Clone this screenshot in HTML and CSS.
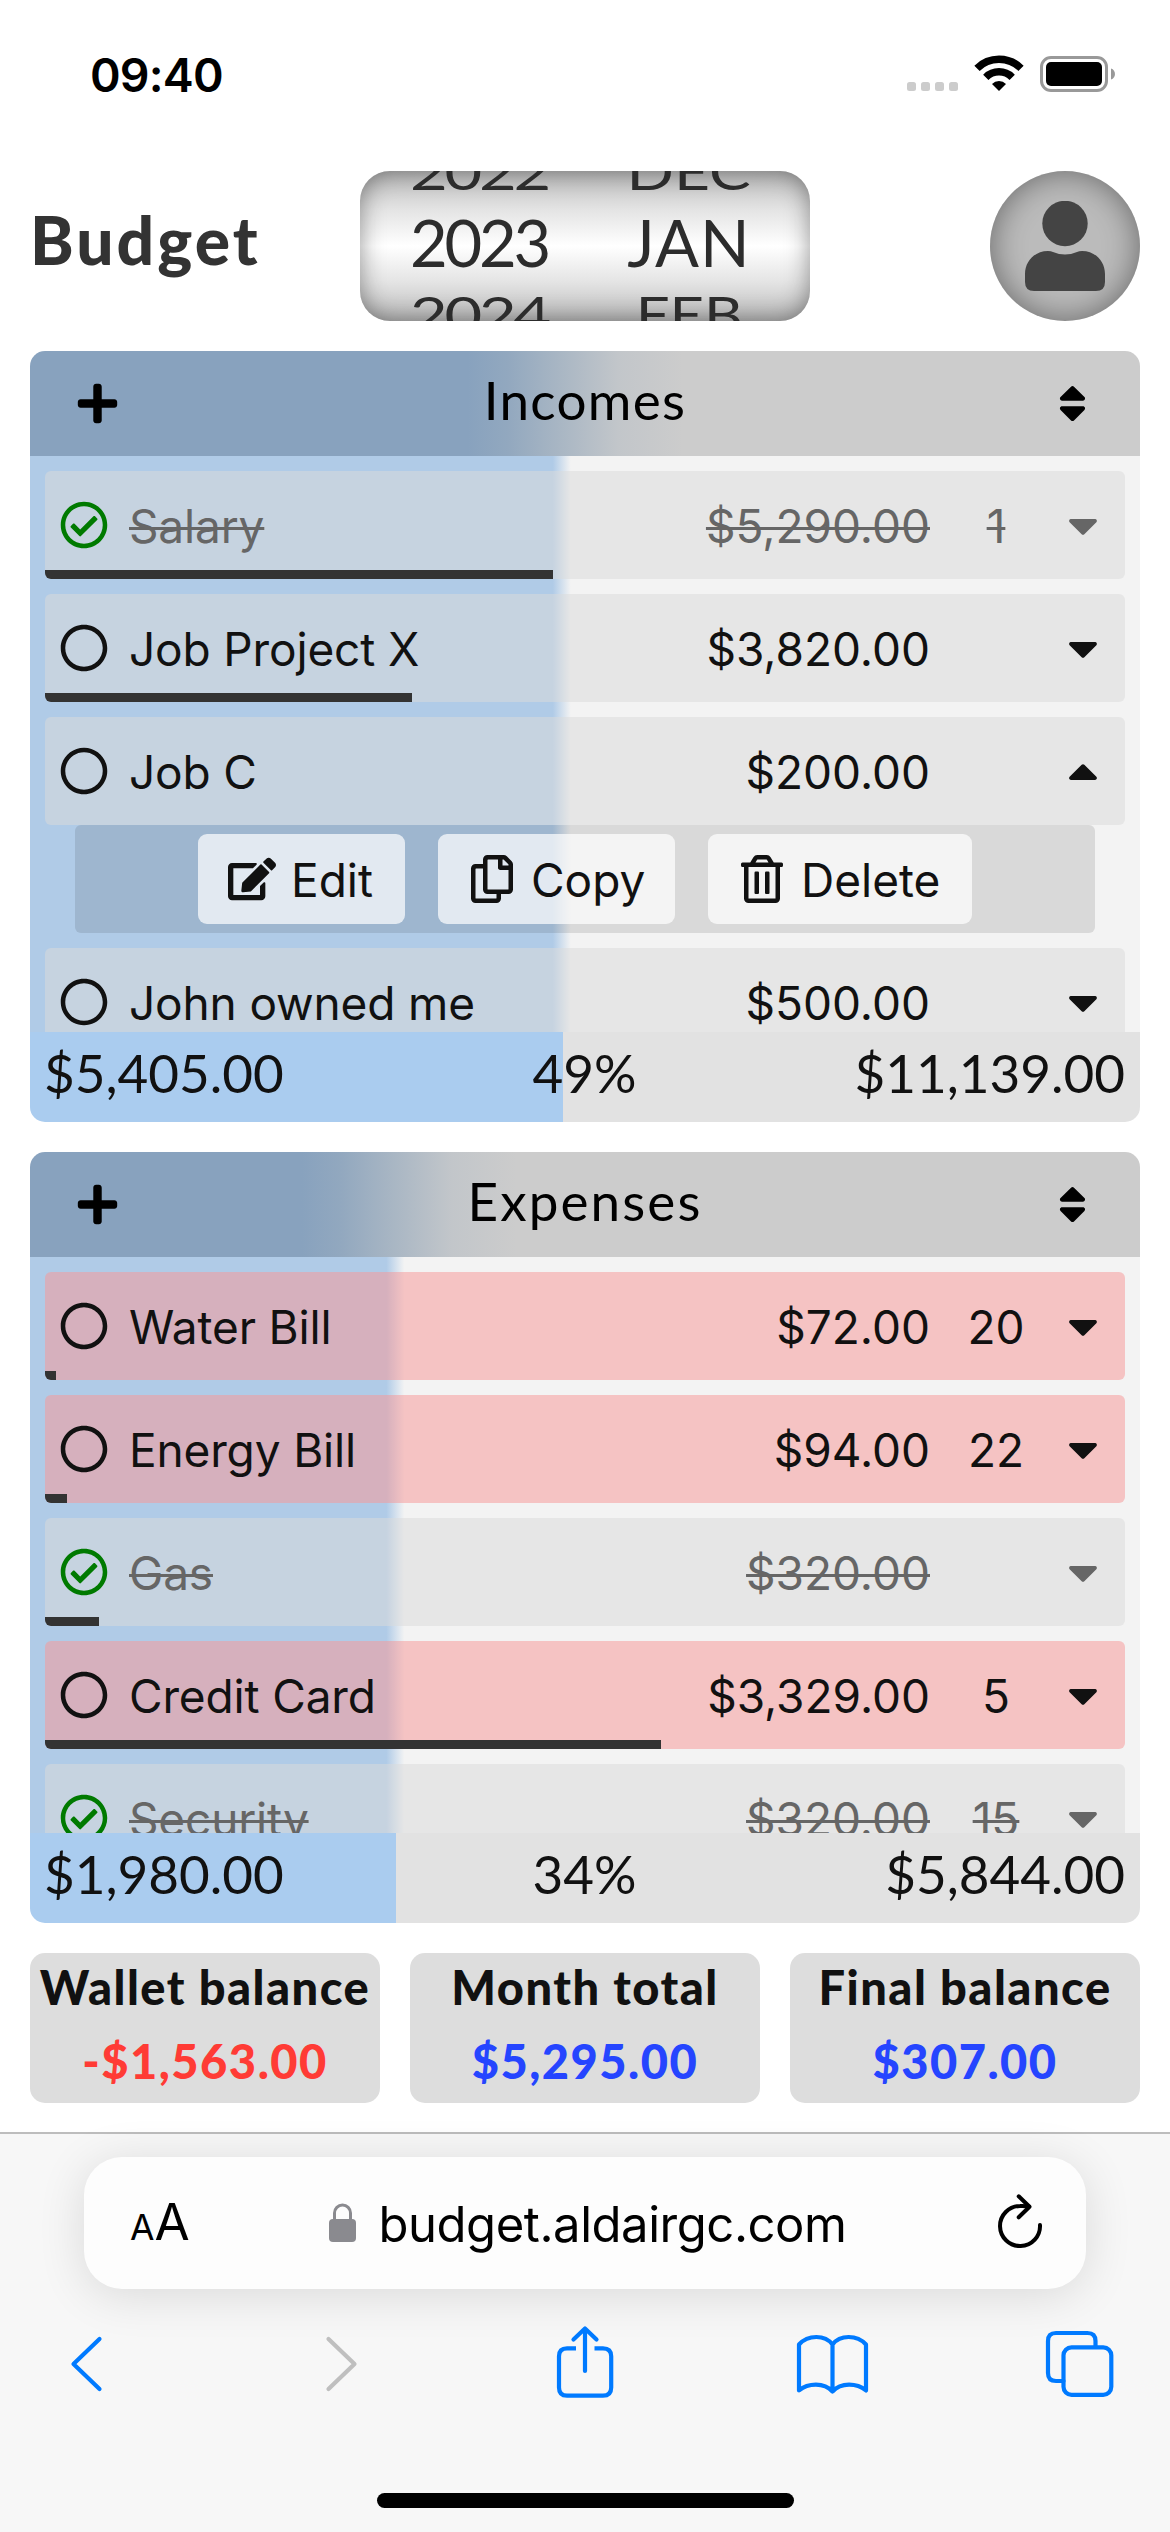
FILE: index.html
```html
<!DOCTYPE html>
<html lang="en">
<head>
<meta charset="utf-8">
<title>Budget</title>
<link rel="stylesheet" href="styles.css">
</head>
<body>
<svg class="defs" aria-hidden="true">
  <symbol id="plus" viewBox="0 0 448 512"><path d="M416 208H272V64c0-17.67-14.33-32-32-32h-32c-17.67 0-32 14.33-32 32v144H32c-17.67 0-32 14.33-32 32v32c0 17.67 14.33 32 32 32h144v144c0 17.67 14.33 32 32 32h32c17.67 0 32-14.33 32-32V304h144c17.67 0 32-14.33 32-32v-32c0-17.67-14.33-32-32-32z"/></symbol>
  <symbol id="sort" viewBox="0 0 320 512"><path d="M41 288h238c21.4 0 32.1 25.9 17 41L177 448c-9.4 9.4-24.6 9.4-33.9 0L24 329c-15.1-15.1-4.4-41 17-41zm255-105L177 64c-9.4-9.4-24.6-9.4-33.9 0L24 183c-15.1 15.1-4.4 41 17 41h238c21.4 0 32.1-25.9 17-41z"/></symbol>
  <symbol id="down" viewBox="0 0 320 512"><path d="M31.3 192h257.3c17.8 0 26.7 21.5 14.1 34.1L174.1 354.7c-7.8 7.8-20.5 7.8-28.3 0L17.2 226.1C4.6 213.5 13.5 192 31.3 192z"/></symbol>
  <symbol id="up" viewBox="0 0 320 512"><path d="M288.662 352H31.338c-17.818 0-26.741-21.543-14.142-34.142l128.662-128.662c7.81-7.81 20.474-7.81 28.284 0l128.662 128.662c12.6 12.599 3.676 34.142-14.142 34.142z"/></symbol>
  <symbol id="circle" viewBox="0 0 512 512"><path d="M256 8C119 8 8 119 8 256s111 248 248 248 248-111 248-248S393 8 256 8zm0 448c-110.500 0-200-89.500-200-200S145.500 56 256 56s200 89.500 200 200-89.500 200-200 200z"/></symbol>
  <symbol id="check" viewBox="0 0 512 512"><path d="M256 8C119.033 8 8 119.033 8 256s111.033 248 248 248 248-111.033 248-248S392.967 8 256 8zm0 48c110.532 0 200 89.451 200 200 0 110.532-89.451 200-200 200-110.532 0-200-89.451-200-200 0-110.532 89.451-200 200-200m140.204 130.267l-22.536-22.718c-4.667-4.705-12.265-4.736-16.970-.068L215.346 303.697l-59.792-60.277c-4.667-4.705-12.265-4.736-16.970-.069l-22.719 22.536c-4.705 4.667-4.736 12.265-.068 16.971l90.781 91.516c4.667 4.705 12.265 4.736 16.970.068l172.589-171.204c4.704-4.668 4.734-12.266.066-16.971z"/></symbol>
  <symbol id="edit" viewBox="0 0 576 512"><path d="M402.600 83.200l90.200 90.200c3.800 3.800 3.800 10 0 13.800L274.400 405.600l-92.800 10.300c-12.400 1.400-22.900-9.100-21.500-21.500l10.300-92.800L388.800 83.200c3.800-3.800 10-3.800 13.800 0zm162-22.900l-48.800-48.800c-15.200-15.200-39.900-15.200-55.200 0l-35.400 35.400c-3.800 3.800-3.800 10 0 13.800l90.200 90.200c3.800 3.800 10 3.800 13.800 0l35.400-35.400c15.200-15.300 15.200-40 0-55.200zM384 346.200V448H64V128h229.800c3.200 0 6.200-1.300 8.500-3.500l40-40c7.600-7.600 2.200-20.500-8.500-20.500H48C21.500 64 0 85.500 0 112v352c0 26.500 21.500 48 48 48h352c26.500 0 48-21.500 48-48V306.200c0-10.700-12.900-16-20.500-8.500l-40 40c-2.200 2.300-3.500 5.300-3.500 8.500z"/></symbol>
  <symbol id="copy" viewBox="0 0 448 512"><path d="M433.941 65.941l-51.882-51.882A48 48 0 0 0 348.118 0H176c-26.510 0-48 21.490-48 48v48H48c-26.510 0-48 21.490-48 48v320c0 26.510 21.490 48 48 48h224c26.510 0 48-21.490 48-48v-48h80c26.510 0 48-21.490 48-48V99.882a48 48 0 0 0-14.059-33.941zM266 464H54a6 6 0 0 1-6-6V150a6 6 0 0 1 6-6h74v224c0 26.510 21.490 48 48 48h96v42a6 6 0 0 1-6 6zm128-96H182a6 6 0 0 1-6-6V54a6 6 0 0 1 6-6h106v88c0 13.255 10.745 24 24 24h88v202a6 6 0 0 1-6 6zm6-256h-64V48h9.632c1.591 0 3.117.632 4.243 1.757l48.368 48.368a6 6 0 0 1 1.757 4.243V112z"/></symbol>
  <symbol id="trash" viewBox="0 0 448 512"><path d="M268 416h24a12 12 0 0 0 12-12V188a12 12 0 0 0-12-12h-24a12 12 0 0 0-12 12v216a12 12 0 0 0 12 12zM432 80h-82.410l-34-56.700A48 48 0 0 0 274.410 0H173.590a48 48 0 0 0-41.160 23.300L98.410 80H16A16 16 0 0 0 0 96v16a16 16 0 0 0 16 16h16v336a48 48 0 0 0 48 48h288a48 48 0 0 0 48-48V128h16a16 16 0 0 0 16-16V96a16 16 0 0 0-16-16zM171.840 50.910A6 6 0 0 1 177 48h94a6 6 0 0 1 5.150 2.910L293.610 80H154.390zM368 464H80V128h288zm-212-48h24a12 12 0 0 0 12-12V188a12 12 0 0 0-12-12h-24a12 12 0 0 0-12 12v216a12 12 0 0 0 12 12z"/></symbol>
</svg>

<div class="status">
  <span class="time">09:40</span>
  <svg class="status-icons" width="212" height="40" viewBox="905 54 212 40">
    <g fill="#cccccc"><rect x="907" y="82" width="9" height="9" rx="2.500"/><rect x="921" y="82" width="9" height="9" rx="2.500"/><rect x="935" y="82" width="9" height="9" rx="2.500"/><rect x="949" y="82" width="9" height="9" rx="2.500"/></g>
    <g fill="none" stroke="#000" stroke-width="7.500"><path d="M977 68.300a31.300 31.300 0 0 1 44 0"/><path d="M985.800 77.300a18.700 18.700 0 0 1 26.400 0"/></g>
    <path d="M999 91l-7-7a9.800 9.800 0 0 1 14 0z"/>
    <rect x="1041.500" y="57.500" width="65" height="33" rx="9.500" fill="none" stroke="#999" stroke-width="3"/>
    <rect x="1046" y="62" width="56" height="24" rx="5"/>
    <path d="M1111 68.500c5.300 1.500 5.300 9.500 0 11z" fill="#999"/>
  </svg>
</div>

<header class="topbar">
  <h1>Budget</h1>
  <div class="picker">
    <div class="wheel years"><span class="prev">2022</span><span class="now">2023</span><span class="next">2024</span></div>
    <div class="wheel months"><span class="prev">DEC</span><span class="now">JAN</span><span class="next">FEB</span></div>
  </div>
  <div class="avatar"><svg width="80" height="90" viewBox="0 0 80 90"><circle cx="40" cy="22.500" r="22.700"/><path d="M0 73C0 60 10 50 23 50Q26 50 28 51Q40 56 52 51Q54 50 57 50C70 50 80 60 80 73V81Q80 90 71 90H9Q0 90 0 81Z"/></svg></div>
</header>

<section class="panel incomes">
  <div class="panel-head"><svg class="i45"><use href="#plus"/></svg><h2>Incomes</h2><svg class="i45"><use href="#sort"/></svg></div>
  <div class="list">
    <div class="row done"><svg class="i48"><use href="#check"/></svg><span class="name"><s>Salary</s></span><span class="amount"><s>$5,290.00</s></span><span class="day"><s>1</s></span><svg class="caret"><use href="#down"/></svg><i class="bar" style="width:47%"></i></div>
    <div class="row"><svg class="i48"><use href="#circle"/></svg><span class="name">Job Project X</span><span class="amount">$3,820.00</span><span class="day"></span><svg class="caret"><use href="#down"/></svg><i class="bar" style="width:34%"></i></div>
    <div class="row"><svg class="i48"><use href="#circle"/></svg><span class="name">Job C</span><span class="amount">$200.00</span><span class="day"></span><svg class="caret"><use href="#up"/></svg></div>
    <div class="actions">
      <button class="edit"><svg class="i48"><use href="#edit"/></svg><span>Edit</span></button>
      <button class="copy"><svg class="i48"><use href="#copy"/></svg><span>Copy</span></button>
      <button class="delete"><svg class="i48"><use href="#trash"/></svg><span>Delete</span></button>
    </div>
    <div class="row"><svg class="i48"><use href="#circle"/></svg><span class="name">John owned me</span><span class="amount">$500.00</span><span class="day"></span><svg class="caret"><use href="#down"/></svg></div>
  </div>
  <div class="totals"><span>$5,405.00</span><span>49%</span><span>$11,139.00</span></div>
</section>

<section class="panel expenses">
  <div class="panel-head"><svg class="i45"><use href="#plus"/></svg><h2>Expenses</h2><svg class="i45"><use href="#sort"/></svg></div>
  <div class="list">
    <div class="row late"><svg class="i48"><use href="#circle"/></svg><span class="name">Water Bill</span><span class="amount">$72.00</span><span class="day">20</span><svg class="caret"><use href="#down"/></svg><i class="bar" style="width:1%"></i></div>
    <div class="row late"><svg class="i48"><use href="#circle"/></svg><span class="name">Energy Bill</span><span class="amount">$94.00</span><span class="day">22</span><svg class="caret"><use href="#down"/></svg><i class="bar" style="width:2%"></i></div>
    <div class="row done"><svg class="i48"><use href="#check"/></svg><span class="name"><s>Gas</s></span><span class="amount"><s>$320.00</s></span><span class="day"></span><svg class="caret"><use href="#down"/></svg><i class="bar" style="width:5%"></i></div>
    <div class="row late"><svg class="i48"><use href="#circle"/></svg><span class="name">Credit Card</span><span class="amount">$3,329.00</span><span class="day">5</span><svg class="caret"><use href="#down"/></svg><i class="bar" style="width:57%"></i></div>
    <div class="row done"><svg class="i48"><use href="#check"/></svg><span class="name"><s>Security</s></span><span class="amount"><s>$320.00</s></span><span class="day"><s>15</s></span><svg class="caret"><use href="#down"/></svg></div>
  </div>
  <div class="totals"><span>$1,980.00</span><span>34%</span><span>$5,844.00</span></div>
</section>

<div class="summary">
  <div class="card"><h3>Wallet balance</h3><p class="negative">-$1,563.00</p></div>
  <div class="card"><h3>Month total</h3><p>$5,295.00</p></div>
  <div class="card"><h3>Final balance</h3><p>$307.00</p></div>
</div>

<footer class="browser">
  <div class="address">
    <div class="aa"><small>A</small><b>A</b></div>
    <div class="url"><svg width="27" height="40" viewBox="0 0 27 40"><rect x="0" y="16" width="27" height="23" rx="4" fill="#8a8a8f"/><path d="M5.500 17V10a8 8 0 0 1 16 0v7" fill="none" stroke="#8a8a8f" stroke-width="3"/></svg><span>budget.aldairgc.com</span></div>
    <svg class="reload" width="46" height="56" viewBox="0 0 46 56"><g fill="none" stroke="#000" stroke-width="4" stroke-linecap="round" stroke-linejoin="round"><path d="M43 30A20 20 0 1 1 23 11Q28 10.800 32 11.500"/><path d="M21.700 1.300L32.500 11.700L21.700 22.300"/></g></svg>
  </div>
  <nav class="tools">
    <svg width="1050" height="80" viewBox="60 2322 1050 80"><g fill="none" stroke="#007aff" stroke-width="4.200" stroke-linecap="round" stroke-linejoin="round">
      <path d="M99.500 2339L73.500 2364L99.500 2389"/>
      <path d="M328.500 2339L354.500 2364L328.500 2389" stroke="#bfbfbf"/>
      <path d="M576 2348.300H567Q559 2348.300 559 2356.300V2387.500Q559 2395.700 567 2395.700H603Q611.200 2395.700 611.200 2387.500V2356.300Q611.200 2348.300 603 2348.300H594.500" stroke-linecap="butt"/>
      <path d="M585 2371V2329M573.500 2339.500L585 2328.500L596.500 2339.500"/>
      <path d="M832.500 2391.500V2344.500C825 2334.500 808 2334.500 799 2344.500V2390.500C808 2383 824 2382 832.500 2391.500C841 2382 857 2383 866 2390.500V2344.500C857 2334.500 840 2334.500 832.500 2344.500"/>
      <path d="M1063.500 2381H1056Q1048 2381 1048 2373V2341Q1048 2333 1056 2333H1087.500Q1095.500 2333 1095.500 2341V2347"/><rect x="1063.500" y="2347.300" width="47.800" height="47.500" rx="8"/>
    </g></svg>
  </nav>
  <div class="home"></div>
</footer>
</body>
</html>
```
FILE: styles.css
```css
* { box-sizing: border-box; margin: 0; padding: 0; }
body {
  width: 1170px; height: 2532px; overflow: hidden; background: #fff; color: #111;
  display: flex; flex-direction: column;
  font-family: "Inter", "Liberation Sans", sans-serif; font-size: 46px;
}
.defs { display: none; }
.i48 { width: 48px; height: 48px; flex: none; fill: currentColor; }
.i45 { width: 45px; height: 45px; flex: none; fill: currentColor; }
.caret { width: 42px; height: 48px; fill: currentColor; }

.status { height: 171px; padding: 0 53px 0 90px; display: flex; justify-content: space-between; }
.time { margin-top: 47px; height: 56px; line-height: 56px; font-size: 46.500px; font-weight: 600; letter-spacing: -.8px; color: #000; }
.status-icons { margin-top: 54px; overflow: visible; }

.topbar { height: 150px; margin: 0 30px; display: grid; grid-template-columns: 330px 450px 1fr; align-items: center; }
h1 { font: 900 66px/80px "Lato", sans-serif; color: #333; letter-spacing: 3px; padding-bottom: 12px; }
.picker {
  height: 150px; border-radius: 30px; overflow: hidden;
  display: grid; grid-template-columns: 238px 182px;
  background: linear-gradient(#bababa, #e4e4e4 26%, #fff 50%, #e4e4e4 74%, #bababa);
  box-shadow: inset 0 0 24px rgba(0, 0, 0, .42);
  font: 400 65px/80px "Lato", sans-serif; color: #2c2c2c;
}
.wheel { height: 142px; display: flex; flex-direction: column; align-items: center; justify-content: center; }
.wheel span { display: block; flex: none; height: 80px; line-height: 80px; }
.years { letter-spacing: -3.200px; }
.months .now { letter-spacing: 1px; }
.prev { transform: translateY(8px) scaleY(.78); }
.next { transform: translateY(-8px) scaleY(.78); }
.months .prev { transform: translateY(8px) scale(.96, .78); }
.months .next { transform: translateY(-8px) scale(.92, .78); }
.avatar {
  width: 150px; height: 150px; border-radius: 50%; justify-self: end; display: flex; align-items: center; justify-content: center;
  background: #bbb; box-shadow: inset 0 0 33px rgba(0, 0, 0, .45); fill: #444;
}

.panel { --fill: 48%; margin: 30px 30px 0; height: 771px; flex: none; border-radius: 15px; overflow: hidden; display: flex; flex-direction: column; }
.expenses { --fill: 33%; }
.panel-head {
  height: 105px; flex: none; display: grid; grid-template-columns: 135px 1fr 135px; align-items: center; justify-items: center; color: #000;
  background: linear-gradient(90deg, #88a2be calc(var(--fill) - 95px), #92a8bf calc(var(--fill) - 55px), #aab7c4 var(--fill), #c2c6ca calc(var(--fill) + 55px), #ccc calc(var(--fill) + 120px));
}
h2 { font: 400 53px/64px "Lato", sans-serif; letter-spacing: 1.300px; padding-bottom: 8px; }
.expenses h2 { letter-spacing: 2.100px; }
.list {
  flex: 1; min-height: 0; overflow: hidden; padding: 15px;
  background: linear-gradient(90deg, #b0cbe7 calc(var(--fill) - 10px), #f3f3f3 calc(var(--fill) + 8px));
}
.row {
  height: 108px; margin-bottom: 15px; padding: 0 21px 0 15px; border-radius: 6px; overflow: hidden; position: relative;
  display: grid; grid-template-columns: 48px 1fr auto 132px 42px; align-items: center;
  background: rgba(218, 218, 218, .52);
}
.late { background: rgba(246, 154, 154, .54); }
.row span, button span { padding-top: 2px; }
.row .name { padding-left: 21px; letter-spacing: -.15px; }
.day { text-align: center; }
.done { color: #666; }
.done svg:first-child { color: #007a00; }
s { text-decoration-thickness: 3px; }
.bar { position: absolute; left: 0; bottom: 0; height: 9px; background: #333; }
.row:has(+ .actions) { margin-bottom: 0; }
.actions {
  height: 108px; margin: 0 30px 15px; border-radius: 6px; background: rgba(34, 34, 34, .12);
  display: flex; align-items: center; justify-content: center; gap: 33px;
}
button {
  height: 90px; border: 0; border-radius: 9px; padding: 0 0 0 30px; background: rgba(255, 255, 255, .7);
  display: flex; align-items: center; gap: 15px; font: inherit; color: inherit;
}
.edit { width: 207px; }
.copy { width: 237px; }
.delete { width: 264px; }
.totals {
  height: 90px; flex: none; padding: 0 15px 9px 14px; display: grid; grid-template-columns: 1fr auto 1fr; align-items: center;
  font: 400 53px/64px "Lato", sans-serif;
  background: linear-gradient(90deg, #aaccef var(--fill), #e2e2e2 var(--fill));
}
.totals span:last-child { text-align: right; }

.summary { margin: 30px 30px 0; height: 150px; flex: none; display: grid; grid-template-columns: repeat(3, 1fr); gap: 30px; }
.card { border-radius: 15px; background: #ddd; text-align: center; font-family: "Lato", sans-serif; white-space: nowrap; letter-spacing: 1.500px; }
h3 { font-size: 47px; line-height: 69px; font-weight: 900; }
.card p { font-size: 47px; line-height: 78px; font-weight: 900; color: #2545ff; }
.card .negative { color: #ff3b35; }

.browser { margin-top: 29px; flex: 1; border-top: 2px solid #bdbdbd; background: #f7f7f7; display: flex; flex-direction: column; align-items: center; }
.address {
  width: 1002px; height: 132px; margin-top: 23px; flex: none; border-radius: 38px; background: #fdfdfd; box-shadow: 0 6px 48px rgba(0, 0, 0, .12);
  padding: 0 43px 0 46px; display: grid; grid-template-columns: 150px 1fr 150px; align-items: center; color: #000;
}
.aa { line-height: 60px; white-space: nowrap; padding-top: 4px; }
.aa small { font-size: 35.500px; }
.aa b { font-size: 51px; font-weight: 400; }
.url { display: flex; align-items: center; justify-content: center; gap: 22px; font-size: 49px; line-height: 60px; letter-spacing: -.45px; padding-left: 3px; }
.url span { padding-top: 4px; }
.reload { justify-self: end; overflow: visible; }
.tools { height: 80px; margin-top: 33px; flex: none; }
.tools svg { display: block; overflow: visible; }
.home { width: 417px; height: 15px; border-radius: 8px; background: #000; margin-top: 91px; }
```
